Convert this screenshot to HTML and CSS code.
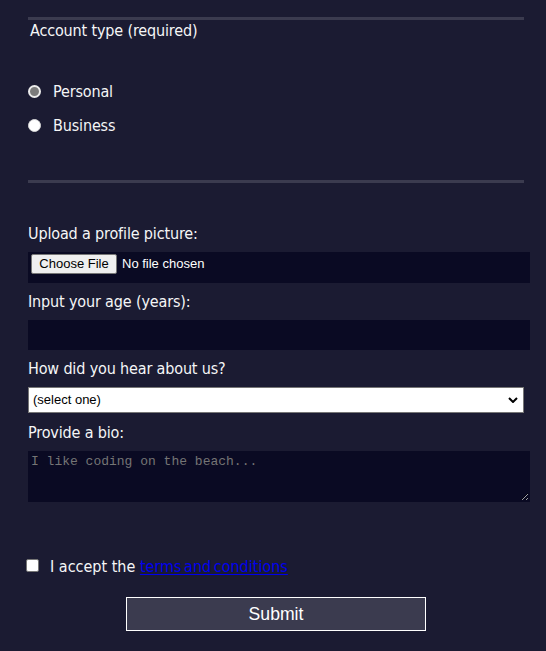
FILE: index.html
```html
<!DOCTYPE html>
<html lang="en">
<head>
<meta charset="utf-8">
<title>Registration Form</title>
<link rel="stylesheet" href="styles.css">
</head>
<body>
<form class="form">
  <div class="section-end"></div>

  <div class="account">
    <div class="legend">Account type (required)</div>
    <label class="choice"><span class="radio radio-hover"></span>Personal</label>
    <label class="choice"><span class="radio"></span>Business</label>
  </div>

  <div class="details">
    <div class="field-label">Upload a profile picture:</div>
    <div class="control file-control">
      <span class="file-button">Choose File</span>
      <span class="file-status">No file chosen</span>
    </div>

    <div class="field-label">Input your age (years):</div>
    <input class="control text-control" type="text" aria-label="age">

    <div class="field-label">How did you hear about us?</div>
    <div class="select-control">
      <span>(select one)</span>
      <svg class="chevron" width="10" height="6" viewBox="0 0 10 6"><path d="M1 1 L5 5 L9 1" fill="none" stroke="#000" stroke-width="2"/></svg>
    </div>

    <div class="field-label">Provide a bio:</div>
    <textarea class="control bio-control" placeholder="I like coding on the beach..."></textarea>
  </div>

  <div class="terms"><span class="checkbox"></span>I accept the <a class="terms-link" href="#">terms and conditions</a></div>

  <div class="submit">Submit</div>
</form>
</body>
</html>
```

FILE: styles.css
```css
* {
  box-sizing: border-box;
}

body {
  margin: 0;
  background: #1b1b32;
  color: #f5f6f7;
  font-family: "DejaVu Sans Condensed", "DejaVu Sans", sans-serif;
  font-size: 16px;
  line-height: 22px;
  letter-spacing: -0.15px;
}

.form {
  width: 496px;
  margin-left: 28px;
}

.section-end {
  height: 20px;
  border-bottom: 3px solid #3b3b4f;
}

.account {
  border-bottom: 3px solid #3b3b4f;
  padding-bottom: 45px;
}

.legend {
  height: 20px;
  padding-left: 2px;
  margin-bottom: 41px;
}

.choice {
  display: flex;
  align-items: flex-start;
  height: 20px;
}

.choice + .choice {
  margin-top: 14px;
}

.radio {
  width: 13px;
  height: 13px;
  margin-top: 4px;
  margin-right: 12px;
  border-radius: 50%;
  background: #ffffff;
  border: 1px solid #d8d8d8;
}

.radio-hover {
  background: #7b7b7b;
  border: 2px solid #ececec;
}

.details {
  padding-top: 40px;
}

.field-label {
  height: 20px;
}

.control {
  display: block;
  width: 502px;
  margin: 9px 0 8px 0;
  background: #0a0a23;
  border: 1px solid #0a0a23;
  color: #ffffff;
  letter-spacing: normal;
}

.file-control {
  display: flex;
  align-items: flex-start;
  height: 31px;
  padding: 1px 2px;
  font-family: "Liberation Sans", Arial, sans-serif;
  font-size: 13px;
  line-height: 18px;
}

.file-button {
  width: 86px;
  height: 20px;
  background: #efefef;
  border: 1px solid #767676;
  border-radius: 2px;
  color: #000000;
  text-align: center;
}

.file-status {
  margin-left: 5px;
  line-height: 20px;
}

.text-control {
  height: 30px;
  padding: 1px 2px;
  font: 13px "Liberation Sans", Arial, sans-serif;
  outline: none;
}

.select-control {
  display: flex;
  align-items: center;
  justify-content: space-between;
  width: 496px;
  height: 26px;
  margin: 9px 0 9px 0;
  padding: 0 5px 0 4px;
  background: #ffffff;
  border: 1px solid #767676;
  color: #000000;
  font-family: "Liberation Sans", Arial, sans-serif;
  font-size: 13px;
  line-height: 16px;
  letter-spacing: normal;
}

.chevron {
  display: block;
}

.bio-control {
  height: 51px;
  padding: 2px;
  font: 13px/15px "Liberation Mono", "Courier New", monospace;
  resize: vertical;
  outline: none;
}

.bio-control::placeholder {
  color: #757575;
}

.terms {
  height: 20px;
  margin-top: 54px;
  white-space: nowrap;
  letter-spacing: normal;
}

.checkbox {
  display: inline-block;
  width: 13px;
  height: 13px;
  margin-left: -2px;
  margin-right: 11px;
  vertical-align: baseline;
  background: #ffffff;
  border: 1px solid #767676;
  border-radius: 2px;
}

.terms-link {
  color: #0000ee;
  word-spacing: -2px;
  text-decoration-line: underline;
  text-decoration-color: #0000ee;
  text-decoration-thickness: 1px;
  text-underline-offset: 2px;
}

.submit {
  width: 300px;
  height: 34px;
  margin: 21px auto 0 auto;
  background: #3b3b4f;
  border: 1px solid #ffffff;
  color: #ffffff;
  font-family: "Liberation Sans", Arial, sans-serif;
  font-size: 17.6px;
  line-height: 32px;
  letter-spacing: normal;
  text-align: center;
}
```
